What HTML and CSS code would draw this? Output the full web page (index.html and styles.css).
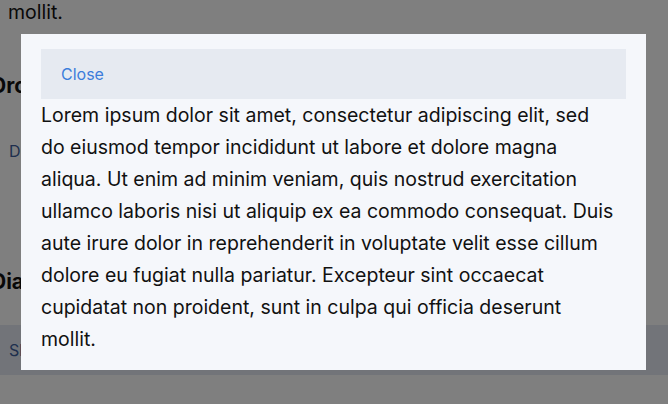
FILE: index.html
```html
<!DOCTYPE html>
<html lang="en">
<head>
<meta charset="utf-8">
<title>Dialog</title>
<link rel="stylesheet" href="styles.css">
</head>
<body>
<main class="page">
  <p class="tail">mollit.</p>
  <h2 class="section-title">Dropdown</h2>
  <div class="dropdown-row"><button class="ghost-btn">Dropdown</button></div>
  <h2 class="section-title dialog-title">Dialog</h2>
  <div class="band"><button class="ghost-btn">Show dialog</button></div>
</main>
<div class="overlay">
  <div class="modal" role="dialog">
    <div class="modal-bar"><button class="close-btn">Close</button></div>
    <p class="modal-text">Lorem ipsum dolor sit amet, consectetur adipiscing elit, sed do eiusmod tempor incididunt ut labore et dolore magna aliqua. Ut enim ad minim veniam, quis nostrud exercitation ullamco laboris nisi ut aliquip ex ea commodo consequat. Duis aute irure dolor in reprehenderit in voluptate velit esse cillum dolore eu fugiat nulla pariatur. Excepteur sint occaecat cupidatat non proident, sunt in culpa qui officia deserunt mollit.</p>
  </div>
</div>
</body>
</html>
```
FILE: styles.css
```css
html, body {
  margin: 0;
  padding: 0;
  height: 100%;
  overflow: hidden;
  background: #ffffff;
  font-family: Inter, "Noto Sans", sans-serif;
  color: #111111;
}
.page {
  padding: 0 8px;
}
.tail {
  margin: -4px 0 0;
  font-size: 19.5px;
  line-height: 32px;
}
.section-title {
  margin: 44px 0 0 -17px;
  font-size: 21px;
  line-height: 28px;
  font-weight: 700;
}
.dropdown-row {
  margin-top: 31px;
  height: 40px;
  display: flex;
  align-items: center;
}
.ghost-btn {
  border: 0;
  background: transparent;
  padding: 0 0 0 1px;
  font-family: inherit;
  font-size: 16px;
  color: #3e5f9c;
}
.dialog-title {
  margin-top: 97px;
}
.band {
  margin: 29px -8px 0;
  padding: 0 8px;
  height: 50px;
  background: #e4e9f2;
  display: flex;
  align-items: center;
}
.overlay {
  position: fixed;
  inset: 0;
  background: rgba(0, 0, 0, 0.5);
  display: flex;
  align-items: center;
  justify-content: center;
}
.modal {
  width: 625px;
  box-sizing: border-box;
  padding: 15px 20px;
  background: #f5f7fb;
  margin-left: -1px;
}
.modal-bar {
  height: 50px;
  background: #e6eaf1;
  display: flex;
  align-items: center;
  padding-left: 20px;
}
.close-btn {
  border: 0;
  background: transparent;
  padding: 0;
  font-family: inherit;
  font-size: 16px;
  color: #3d7ddb;
}
.modal-text {
  margin: 0;
  padding-right: 11px;
  font-size: 19.5px;
  line-height: 32px;
  color: #111111;
}
```
